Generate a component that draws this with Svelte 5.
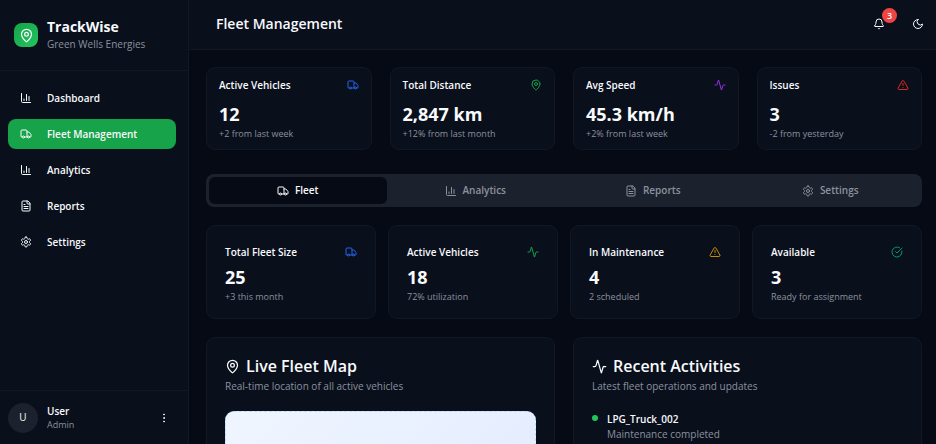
<script>
    let activeNav = $state('Fleet Management');
    let activeTab = $state('Fleet');

    const navItems = [
        { label: 'Dashboard', icon: 'chart' },
        { label: 'Fleet Management', icon: 'truck' },
        { label: 'Analytics', icon: 'chart' },
        { label: 'Reports', icon: 'file' },
        { label: 'Settings', icon: 'gear' }
    ];

    const stats = [
        { title: 'Active Vehicles', value: '12', note: '+2 from last week', icon: 'truck', tone: 'blue' },
        { title: 'Total Distance', value: '2,847 km', note: '+12% from last month', icon: 'pin', tone: 'green' },
        { title: 'Avg Speed', value: '45.3 km/h', note: '+2% from last week', icon: 'activity', tone: 'purple' },
        { title: 'Issues', value: '3', note: '-2 from yesterday', icon: 'alert', tone: 'red' }
    ];

    const tabs = [
        { label: 'Fleet', icon: 'truck' },
        { label: 'Analytics', icon: 'chart' },
        { label: 'Reports', icon: 'file' },
        { label: 'Settings', icon: 'gear' }
    ];

    const fleet = [
        { title: 'Total Fleet Size', value: '25', note: '+3 this month', icon: 'truck', tone: 'blue' },
        { title: 'Active Vehicles', value: '18', note: '72% utilization', icon: 'activity', tone: 'green' },
        { title: 'In Maintenance', value: '4', note: '2 scheduled', icon: 'alert', tone: 'amber' },
        { title: 'Available', value: '3', note: 'Ready for assignment', icon: 'check', tone: 'emerald' }
    ];

    const activities = [
        { vehicle: 'LPG_Truck_002', text: 'Maintenance completed' }
    ];
</script>

{#snippet icon(name)}
    <svg class="icon" viewBox="0 0 24 24" aria-hidden="true">
        {#if name === 'truck'}
            <path d="M14 18V6a2 2 0 0 0-2-2H4a2 2 0 0 0-2 2v11a1 1 0 0 0 1 1h2" />
            <path d="M15 18H9" />
            <path d="M19 18h2a1 1 0 0 0 1-1v-3.65a1 1 0 0 0-.22-.624l-3.48-4.35A1 1 0 0 0 17.52 8H14" />
            <circle cx="17" cy="18" r="2" />
            <circle cx="7" cy="18" r="2" />
        {:else if name === 'chart'}
            <path d="M3 3v16a2 2 0 0 0 2 2h16" />
            <path d="M18 17V9" />
            <path d="M13 17V5" />
            <path d="M8 17v-3" />
        {:else if name === 'file'}
            <path d="M15 2H6a2 2 0 0 0-2 2v16a2 2 0 0 0 2 2h12a2 2 0 0 0 2-2V7Z" />
            <path d="M14 2v4a2 2 0 0 0 2 2h4" />
            <path d="M10 9H8" />
            <path d="M16 13H8" />
            <path d="M16 17H8" />
        {:else if name === 'gear'}
            <path d="M12.22 2h-.44a2 2 0 0 0-2 2v.18a2 2 0 0 1-1 1.73l-.43.25a2 2 0 0 1-2 0l-.15-.08a2 2 0 0 0-2.73.73l-.22.38a2 2 0 0 0 .73 2.73l.15.1a2 2 0 0 1 1 1.72v.51a2 2 0 0 1-1 1.74l-.15.09a2 2 0 0 0-.73 2.73l.22.38a2 2 0 0 0 2.73.73l.15-.08a2 2 0 0 1 2 0l.43.25a2 2 0 0 1 1 1.73V20a2 2 0 0 0 2 2h.44a2 2 0 0 0 2-2v-.18a2 2 0 0 1 1-1.73l.43-.25a2 2 0 0 1 2 0l.15.08a2 2 0 0 0 2.73-.73l.22-.39a2 2 0 0 0-.73-2.73l-.15-.08a2 2 0 0 1-1-1.74v-.5a2 2 0 0 1 1-1.74l.15-.09a2 2 0 0 0 .73-2.73l-.22-.38a2 2 0 0 0-2.73-.73l-.15.08a2 2 0 0 1-2 0l-.43-.25a2 2 0 0 1-1-1.73V4a2 2 0 0 0-2-2z" />
            <circle cx="12" cy="12" r="3" />
        {:else if name === 'pin'}
            <path d="M20 10c0 4.993-5.539 10.193-7.399 11.799a1 1 0 0 1-1.202 0C9.539 20.193 4 14.993 4 10a8 8 0 0 1 16 0" />
            <circle cx="12" cy="10" r="3" />
        {:else if name === 'activity'}
            <path d="M22 12h-2.48a2 2 0 0 0-1.93 1.46l-2.35 8.36a.25.25 0 0 1-.48 0L9.24 2.18a.25.25 0 0 0-.48 0l-2.35 8.36A2 2 0 0 1 4.49 12H2" />
        {:else if name === 'alert'}
            <path d="m21.73 18-8-14a2 2 0 0 0-3.48 0l-8 14A2 2 0 0 0 4 21h16a2 2 0 0 0 1.73-3" />
            <path d="M12 9v4" />
            <path d="M12 17h.01" />
        {:else if name === 'check'}
            <path d="M21.801 10A10 10 0 1 1 17 3.335" />
            <path d="m9 11 3 3L22 4" />
        {:else if name === 'bell'}
            <path d="M10.268 21a2 2 0 0 0 3.464 0" />
            <path d="M3.262 15.326A1 1 0 0 0 4 17h16a1 1 0 0 0 .74-1.673C19.41 13.956 18 12.499 18 8A6 6 0 0 0 6 8c0 4.499-1.411 5.956-2.738 7.326" />
        {:else if name === 'moon'}
            <path d="M12 3a6 6 0 0 0 9 9 9 9 0 1 1-9-9Z" />
        {:else if name === 'dots'}
            <circle cx="12" cy="12" r="1" />
            <circle cx="12" cy="5" r="1" />
            <circle cx="12" cy="19" r="1" />
        {/if}
    </svg>
{/snippet}

<div class="layout">
    <aside class="sidebar">
        <div class="brand">
            <div class="logo">{@render icon('pin')}</div>
            <div>
                <div class="brand-name">TrackWise</div>
                <div class="brand-sub">Green Wells Energies</div>
            </div>
        </div>

        <nav class="nav">
            {#each navItems as item (item.label)}
                <button class="nav-item" class:active={activeNav === item.label} onclick={() => (activeNav = item.label)}>
                    {@render icon(item.icon)}
                    <span>{item.label}</span>
                </button>
            {/each}
        </nav>

        <div class="user">
            <div class="avatar">U</div>
            <div class="user-info">
                <div class="user-name">User</div>
                <div class="user-role">Admin</div>
            </div>
            <button class="icon-btn" aria-label="User menu">{@render icon('dots')}</button>
        </div>
    </aside>

    <div class="main">
        <header class="topbar">
            <h1>Fleet Management</h1>
            <div class="actions">
                <button class="icon-btn" aria-label="Notifications">
                    {@render icon('bell')}
                    <span class="badge">3</span>
                </button>
                <button class="icon-btn" aria-label="Toggle theme">{@render icon('moon')}</button>
            </div>
        </header>

        <main class="content">
            <section class="stats">
                {#each stats as stat (stat.title)}
                    <div class="card stat">
                        <div class="card-top">
                            <h3>{stat.title}</h3>
                            <span class={stat.tone}>{@render icon(stat.icon)}</span>
                        </div>
                        <div class="value">{stat.value}</div>
                        <p class="note">{stat.note}</p>
                    </div>
                {/each}
            </section>

            <div class="tabs" role="tablist">
                {#each tabs as tab (tab.label)}
                    <button class="tab" role="tab" aria-selected={activeTab === tab.label} class:selected={activeTab === tab.label} onclick={() => (activeTab = tab.label)}>
                        {@render icon(tab.icon)}
                        <span>{tab.label}</span>
                    </button>
                {/each}
            </div>

            <section class="fleet">
                {#each fleet as item (item.title)}
                    <div class="card fleet-card">
                        <div class="card-top">
                            <h3>{item.title}</h3>
                            <span class={item.tone}>{@render icon(item.icon)}</span>
                        </div>
                        <div class="value">{item.value}</div>
                        <p class="note">{item.note}</p>
                    </div>
                {/each}
            </section>

            <section class="panels">
                <div class="card panel">
                    <h2>{@render icon('pin')}<span>Live Fleet Map</span></h2>
                    <p class="panel-sub">Real-time location of all active vehicles</p>
                    <div class="map"></div>
                </div>
                <div class="card panel">
                    <h2>{@render icon('activity')}<span>Recent Activities</span></h2>
                    <p class="panel-sub">Latest fleet operations and updates</p>
                    <ul class="activities">
                        {#each activities as activity (activity.vehicle)}
                            <li>
                                <span class="dot"></span>
                                <div>
                                    <div class="vehicle">{activity.vehicle}</div>
                                    <div class="activity-text">{activity.text}</div>
                                </div>
                            </li>
                        {/each}
                    </ul>
                </div>
            </section>
        </main>
    </div>
</div>

<style>
    :global(body) {
        margin: 0;
        background: #060a14;
    }
    h1, h2, h3, p, ul {
        margin: 0;
        padding: 0;
    }
    button {
        font: inherit;
        color: inherit;
        background: none;
        border: 0;
        padding: 0;
        cursor: pointer;
    }
    .layout {
        display: flex;
        height: 100vh;
        overflow: hidden;
        font-family: "Segoe UI", "Open Sans", "Noto Sans", sans-serif;
        font-size: 10px;
        line-height: 15px;
        color: #f8fafc;
    }
    .icon {
        display: block;
        flex: none;
        width: 12px;
        height: 12px;
        fill: none;
        stroke: currentColor;
        stroke-width: 2;
        stroke-linecap: round;
        stroke-linejoin: round;
    }

    /* sidebar */
    .sidebar {
        display: flex;
        flex-direction: column;
        flex: none;
        width: 188px;
        background: #0a0f1c;
        border-right: 1px solid #121724;
    }
    .brand {
        display: flex;
        align-items: center;
        gap: 9px;
        height: 70px;
        padding: 0 14px;
        border-bottom: 1px solid #121724;
    }
    .logo {
        display: flex;
        align-items: center;
        justify-content: center;
        width: 24px;
        height: 24px;
        border-radius: 8px;
        background: linear-gradient(135deg, #16a34a, #22c55e);
    }
    .logo .icon {
        width: 15px;
        height: 15px;
    }
    .brand-name {
        font-size: 14px;
        line-height: 20px;
        font-weight: 700;
    }
    .brand-sub {
        padding-bottom: 2px;
        color: #8b929e;
    }
    .nav {
        display: flex;
        flex-direction: column;
        flex: 1;
        gap: 6px;
        padding: 12px 12px 12px 8px;
    }
    .nav-item {
        display: flex;
        align-items: center;
        gap: 15px;
        height: 30px;
        padding: 0 12px;
        border-radius: 8px;
        font-weight: 600;
    }
    .nav-item.active {
        background: #16a34a;
    }
    .user {
        display: flex;
        align-items: center;
        gap: 9px;
        height: 53px;
        padding: 0 18px 0 8px;
        border-top: 1px solid #121724;
    }
    .avatar {
        display: flex;
        align-items: center;
        justify-content: center;
        width: 30px;
        height: 30px;
        border-radius: 50%;
        background: #1c222d;
    }
    .user-info {
        flex: 1;
    }
    .user-name {
        font-weight: 600;
    }
    .user-role {
        font-size: 9px;
        line-height: 12px;
        color: #8b929e;
    }

    /* top bar */
    .main {
        display: flex;
        flex-direction: column;
        flex: 1;
        min-width: 0;
    }
    .topbar {
        display: flex;
        align-items: center;
        justify-content: space-between;
        flex: none;
        height: 47px;
        padding: 0 12px 2px 27px;
        background: #0a0f1c;
        border-bottom: 1px solid #121724;
    }
    h1 {
        font-size: 14px;
        line-height: 20px;
        font-weight: 600;
    }
    .actions {
        display: flex;
        gap: 27px;
    }
    .icon-btn {
        position: relative;
    }
    .badge {
        position: absolute;
        top: -10px;
        right: -12px;
        width: 15px;
        height: 15px;
        border-radius: 50%;
        background: #ef4444;
        font-size: 9px;
        line-height: 15px;
        font-weight: 600;
    }

    /* content */
    .content {
        flex: 1;
        min-height: 0;
        overflow-y: auto;
        scrollbar-width: none;
        padding: 17px 14px 18px 17px;
    }
    .stats,
    .fleet {
        display: grid;
        grid-template-columns: repeat(4, 1fr);
    }
    .stats {
        gap: 18px;
    }
    .fleet {
        gap: 12px;
    }
    .card {
        background: #0a0f1c;
        border: 1px solid #121724;
        border-radius: 9px;
    }
    .stat {
        padding: 9px 12px 8px;
    }
    .fleet-card {
        padding: 18px 18px 14px;
    }
    .card-top {
        display: flex;
        align-items: center;
        justify-content: space-between;
    }
    h3 {
        font-size: 10px;
        line-height: 16px;
        font-weight: 600;
    }
    .value {
        font-size: 18px;
        line-height: 26px;
        font-weight: 700;
    }
    .stat .value {
        margin-top: 8px;
    }
    .fleet-card .value {
        margin-top: 4px;
    }
    .note {
        font-size: 9px;
        line-height: 14px;
        color: #8b929e;
    }
    .blue { color: #2563eb; }
    .green { color: #16a34a; }
    .purple { color: #9333ea; }
    .red { color: #dc2626; }
    .amber { color: #ca8a04; }
    .emerald { color: #059669; }

    .tabs {
        display: grid;
        grid-template-columns: repeat(4, 1fr);
        margin: 24px 0 18px;
        padding: 3px;
        border-radius: 8px;
        background: #1c222d;
        color: #8b929e;
    }
    .tab {
        display: flex;
        align-items: center;
        justify-content: center;
        gap: 6px;
        height: 27px;
        border-radius: 6px;
        font-weight: 600;
    }
    .tab.selected {
        background: #060a14;
        color: #f8fafc;
    }

    /* panels */
    .panels {
        display: grid;
        grid-template-columns: repeat(2, 1fr);
        gap: 18px;
        margin-top: 18px;
    }
    .panel {
        padding: 18px;
    }
    h2 {
        display: flex;
        align-items: center;
        gap: 6px;
        font-size: 16px;
        line-height: 20px;
        font-weight: 600;
    }
    h2 .icon {
        width: 15px;
        height: 15px;
    }
    .panel-sub {
        margin-top: 3px;
        color: #8b929e;
    }
    .map {
        height: 240px;
        margin-top: 17px;
        border: 1px dashed #bfdbfe;
        border-radius: 9px;
        background: linear-gradient(135deg, #eff6ff, #e0e7ff);
    }
    .activities {
        list-style: none;
        margin-top: 18px;
    }
    .activities li {
        display: flex;
        gap: 9px;
    }
    .dot {
        width: 6px;
        height: 6px;
        margin-top: 3px;
        border-radius: 50%;
        background: #22c55e;
    }
    .vehicle {
        font-weight: 600;
    }
    .activity-text {
        color: #8b929e;
    }
</style>
